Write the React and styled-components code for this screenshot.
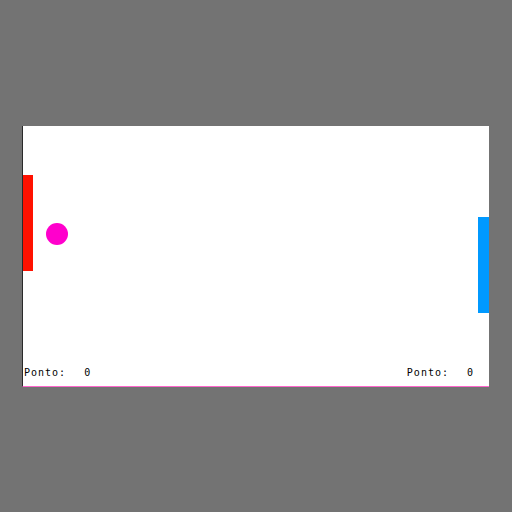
import styled, { createGlobalStyle } from "styled-components";

const Global = createGlobalStyle`
  html, body {
    margin: 0;
    background: #737373;
  }
`;

export default function App() {
  return (
    <Page>
      <Global />
      <Board>
        <Paddle side="left" top={49} color="#ff1100" />
        <Paddle side="right" top={91} color="#0099ff" />
        <Ball />
        <Scores>
          <Score>
            Ponto:<Points>0</Points>
          </Score>
          <Score>
            Ponto:<Points>0</Points>
          </Score>
        </Scores>
      </Board>
    </Page>
  );
}

const Page = styled.div`
  width: 512px;
  height: 512px;
  box-sizing: border-box;
  padding: 126px 0 0 22px;
`;

const Board = styled.div`
  position: relative;
  width: 466px;
  height: 260px;
  background: #ffffff;
  border-left: 1px solid #2a2a2a;
  border-bottom: 1px solid #ff66cc;
  display: flex;
  flex-direction: column;
  justify-content: flex-end;
`;

const Paddle = styled.div`
  position: absolute;
  top: ${({ top }) => top}px;
  ${({ side }) => (side === "left" ? "left: 0;" : "right: 0;")}
  width: ${({ side }) => (side === "left" ? 10 : 11)}px;
  height: 96px;
  background: ${({ color }) => color};
`;

const Ball = styled.div`
  position: absolute;
  left: 23px;
  top: 97px;
  width: 22px;
  height: 22px;
  border-radius: 50%;
  background: #ff00cc;
`;

const Scores = styled.div`
  display: flex;
  justify-content: space-between;
  padding: 0 15px 7px 1px;
`;

const Score = styled.span`
  display: flex;
  font-family: "DejaVu Sans Mono", "Liberation Mono", monospace;
  font-size: 10px;
  line-height: 12px;
  letter-spacing: 1px;
  color: #000;
`;

const Points = styled.span`
  margin-left: 18px;
`;
